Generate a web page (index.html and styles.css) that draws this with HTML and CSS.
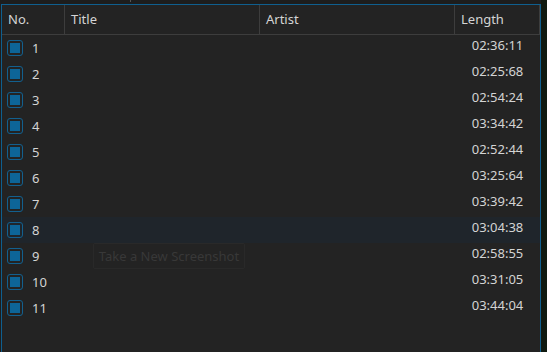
FILE: index.html
```html
<!DOCTYPE html>
<html lang="en">
<head>
    <meta charset="UTF-8">
    <title>Tracks</title>
    <link rel="stylesheet" href="styles.css">
</head>
<body>
    <div class="page">
        <div class="topbar"><span class="tick"></span></div>
        <div class="tracklist">
            <div class="header">
                <div class="col">No.</div>
                <div class="col">Title</div>
                <div class="col">Artist</div>
                <div class="col">Length</div>
            </div>
            <div class="rows">
                <div class="row"><div class="num"><span class="check"></span>1</div><div class="len">02:36:11</div></div>
                <div class="row"><div class="num"><span class="check"></span>2</div><div class="len">02:25:68</div></div>
                <div class="row"><div class="num"><span class="check"></span>3</div><div class="len">02:54:24</div></div>
                <div class="row"><div class="num"><span class="check"></span>4</div><div class="len">03:34:42</div></div>
                <div class="row"><div class="num"><span class="check"></span>5</div><div class="len">02:52:44</div></div>
                <div class="row"><div class="num"><span class="check"></span>6</div><div class="len">03:25:64</div></div>
                <div class="row"><div class="num"><span class="check"></span>7</div><div class="len">03:39:42</div></div>
                <div class="row hover"><div class="num"><span class="check"></span>8</div><div class="len">03:04:38</div></div>
                <div class="row"><div class="num"><span class="check"></span>9</div><div class="len">02:58:55</div></div>
                <div class="row"><div class="num"><span class="check"></span>10</div><div class="len">03:31:05</div></div>
                <div class="row"><div class="num"><span class="check"></span>11</div><div class="len">03:44:04</div></div>
                <div class="tooltip">Take a New Screenshot</div>
            </div>
        </div>
    </div>
</body>
</html>
```

FILE: styles.css
```css
body {
    margin: 0;
    background: #0f1a10;
    font-family: "Noto Sans", "Open Sans", sans-serif;
    font-size: 13px;
    color: #d4d4d4;
    overflow: hidden;
}
.page {
    width: 541px;
    height: 352px;
    background: #1d1d1d;
}
.topbar {
    height: 4px;
    position: relative;
}
.tick {
    position: absolute;
    left: 130px;
    top: 0;
    width: 1px;
    height: 2px;
    background: #555;
}
.tracklist {
    margin-left: 1px;
    width: 538px;
    height: 348px;
    border: 1px solid #0f5f8f;
    border-bottom: none;
    background: #232323;
}
.header {
    display: grid;
    grid-template-columns: 63px 195px 195px 85px;
    height: 29px;
    border-bottom: 1px solid #3d3d3d;
}
.header .col {
    border-right: 1px solid #3d3d3d;
    padding: 5px 0 0 6px;
    line-height: 18px;
}
.rows {
    position: relative;
}
.row {
    display: flex;
    justify-content: space-between;
    height: 26px;
}
.row.hover {
    background: #1f252b;
}
.num {
    display: flex;
    align-items: center;
    gap: 9px;
    padding-left: 5px;
}
.check {
    width: 10px;
    height: 10px;
    padding: 2px;
    border: 1px solid #12608f;
    border-radius: 3px;
    background: #0d6598;
    background-clip: content-box;
}
.len {
    width: 85px;
    text-align: center;
    padding-top: 1px;
    line-height: 18px;
}
.tooltip {
    position: absolute;
    left: 91px;
    top: 208px;
    width: 150px;
    height: 24px;
    border: 1px solid #292929;
    border-radius: 2px;
    color: #383838;
    line-height: 24px;
    text-align: center;
}
```
